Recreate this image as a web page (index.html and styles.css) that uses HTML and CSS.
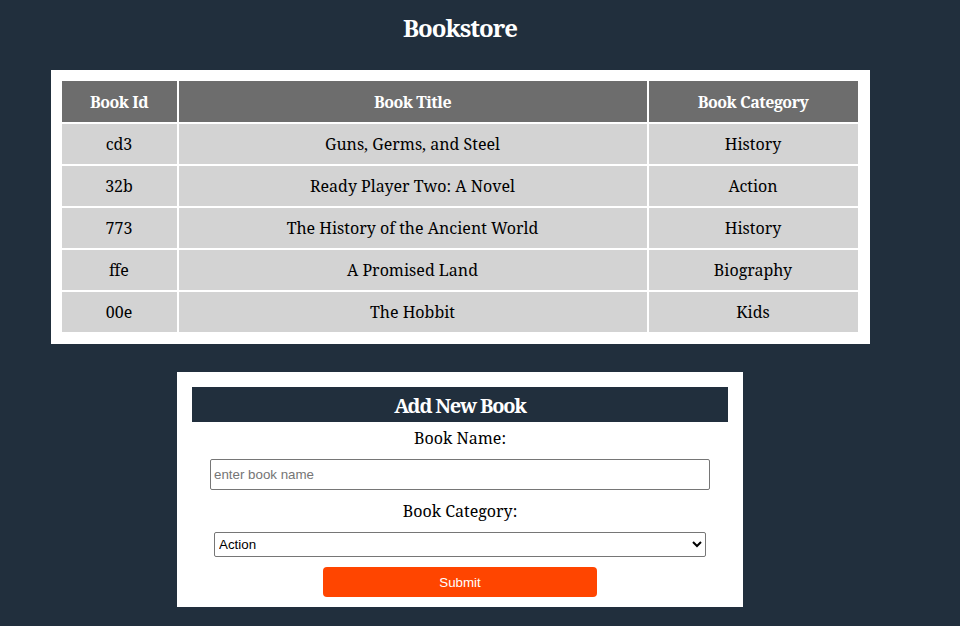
FILE: index.html
```html
<!DOCTYPE html>
<html>
<head>
<meta charset="utf-8">
<title>Bookstore</title>
<link rel="stylesheet" href="styles.css">
</head>
<body>
<div class="page">
  <h1 class="title">Bookstore</h1>
  <div class="table-box">
    <table class="books">
      <thead>
        <tr><th class="c-id">Book Id</th><th class="c-title">Book Title</th><th class="c-cat">Book Category</th></tr>
      </thead>
      <tbody>
        <tr><td>cd3</td><td>Guns, Germs, and Steel</td><td>History</td></tr>
        <tr><td>32b</td><td>Ready Player Two: A Novel</td><td>Action</td></tr>
        <tr><td>773</td><td>The History of the Ancient World</td><td>History</td></tr>
        <tr><td>ffe</td><td>A Promised Land</td><td>Biography</td></tr>
        <tr><td>00e</td><td>The Hobbit</td><td>Kids</td></tr>
      </tbody>
    </table>
  </div>
  <form class="form-box">
    <h2 class="form-title">Add New Book</h2>
    <label class="label" for="name">Book Name:</label>
    <input class="text-input" id="name" type="text" placeholder="enter book name">
    <label class="label cat-label" for="cat">Book Category:</label>
    <select class="select" id="cat">
      <option>Action</option>
      <option>Biography</option>
      <option>History</option>
      <option>Horror</option>
      <option>Kids</option>
      <option>Learning</option>
      <option>Sci-Fi</option>
    </select>
    <button class="submit" type="button">Submit</button>
  </form>
</div>
</body>
</html>
```
FILE: styles.css
```css
html, body {
  margin: 0;
  padding: 0;
  background: #212f3d;
}
body {
  font-family: "Noto Serif", "DejaVu Serif", serif;
  font-size: 16px;
  color: #000;
}
.page {
  width: 920px;
  display: flex;
  flex-direction: column;
  align-items: center;
}
.title {
  margin: 12px 0 0;
  height: 58px;
  font-size: 24px;
  font-weight: 700;
  letter-spacing: -1px;
  color: #fff;
  line-height: 32px;
}
.table-box {
  width: 800px;
  background: #fff;
  padding: 9px 10px 10px 9px;
}
.books {
  width: 800px;
  border-collapse: separate;
  border-spacing: 2px;
  text-align: center;
}
.books th {
  background: #6d6d6d;
  color: #fff;
  font-weight: 700;
  letter-spacing: -0.5px;
  height: 41px;
  padding: 0;
}
.books td {
  background: #d3d3d3;
  height: 40px;
  padding: 0;
}
.c-id { width: 115px; }
.c-cat { width: 209px; }
.form-box {
  margin-top: 28px;
  width: 536px;
  background: #fff;
  padding: 15px 15px 10px;
  display: flex;
  flex-direction: column;
  align-items: center;
}
.form-title {
  align-self: stretch;
  margin: 0;
  height: 35px;
  line-height: 37px;
  background: #212f3d;
  color: #fff;
  font-size: 20px;
  font-weight: 700;
  letter-spacing: -1.2px;
  text-align: center;
}
.label {
  margin-top: 5px;
  line-height: 22px;
}
.cat-label {
  margin-top: 10px;
}
.text-input {
  margin-top: 10px;
  width: 500px;
  height: 31px;
  box-sizing: border-box;
  border: 1px solid #767676;
  border-radius: 2px;
  padding: 1px 3px;
  font-family: "Liberation Sans", Arial, sans-serif;
  font-size: 13.33px;
}
.text-input::placeholder {
  color: #757575;
}
.select {
  margin-top: 10px;
  width: 492px;
  height: 25px;
  box-sizing: border-box;
  border: 1px solid #767676;
  border-radius: 2px;
  background: #fff;
  font-family: "Liberation Sans", Arial, sans-serif;
  font-size: 13.33px;
  color: #000;
}
.submit {
  margin-top: 10px;
  width: 274px;
  height: 30px;
  border: none;
  border-radius: 4px;
  background: #ff4500;
  color: #fff;
  font-family: "Liberation Sans", Arial, sans-serif;
  font-size: 13.33px;
}
```
